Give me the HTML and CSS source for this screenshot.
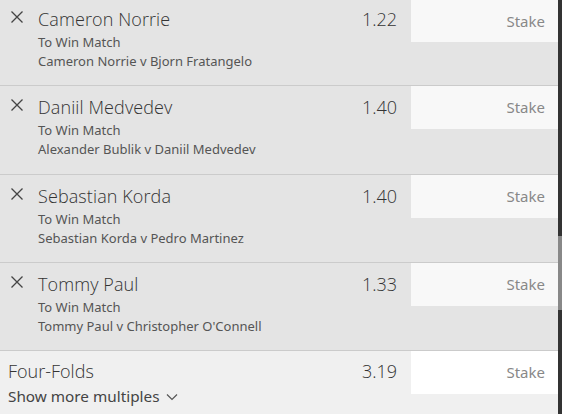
FILE: index.html
```html
<!DOCTYPE html>
<html>
<head>
<meta charset="utf-8">
<link rel="stylesheet" href="styles.css">
</head>
<body>
<div class="page">
  <div class="list">
    <div class="bet first">
      <div class="info">
        <svg class="x" viewBox="0 0 14 14" width="14" height="14"><path d="M1.5 1.5L12.5 12.5M12.5 1.5L1.5 12.5" stroke="#444" stroke-width="1.3" fill="none"/></svg>
        <div class="texts">
          <div class="name">Cameron Norrie</div>
          <div class="market">To Win Match</div>
          <div class="event">Cameron Norrie v Bjorn Fratangelo</div>
        </div>
      </div>
      <div class="odds">1.22</div>
      <div class="stake">Stake</div>
    </div>
    <div class="bet">
      <div class="info">
        <svg class="x" viewBox="0 0 14 14" width="14" height="14"><path d="M1.5 1.5L12.5 12.5M12.5 1.5L1.5 12.5" stroke="#444" stroke-width="1.3" fill="none"/></svg>
        <div class="texts">
          <div class="name">Daniil Medvedev</div>
          <div class="market">To Win Match</div>
          <div class="event">Alexander Bublik v Daniil Medvedev</div>
        </div>
      </div>
      <div class="odds">1.40</div>
      <div class="stake">Stake</div>
    </div>
    <div class="bet">
      <div class="info">
        <svg class="x" viewBox="0 0 14 14" width="14" height="14"><path d="M1.5 1.5L12.5 12.5M12.5 1.5L1.5 12.5" stroke="#444" stroke-width="1.3" fill="none"/></svg>
        <div class="texts">
          <div class="name">Sebastian Korda</div>
          <div class="market">To Win Match</div>
          <div class="event">Sebastian Korda v Pedro Martinez</div>
        </div>
      </div>
      <div class="odds">1.40</div>
      <div class="stake">Stake</div>
    </div>
    <div class="bet">
      <div class="info">
        <svg class="x" viewBox="0 0 14 14" width="14" height="14"><path d="M1.5 1.5L12.5 12.5M12.5 1.5L1.5 12.5" stroke="#444" stroke-width="1.3" fill="none"/></svg>
        <div class="texts">
          <div class="name">Tommy Paul</div>
          <div class="market">To Win Match</div>
          <div class="event">Tommy Paul v Christopher O'Connell</div>
        </div>
      </div>
      <div class="odds">1.33</div>
      <div class="stake">Stake</div>
    </div>
    <div class="multi">
      <div class="multi-info">
        <div class="multi-name">Four-Folds</div>
        <div class="more">Show more multiples <svg class="chev" viewBox="0 0 12 8" width="12" height="8"><path d="M1 1.5L6 6.5L11 1.5" stroke="#555" stroke-width="1.2" fill="none"/></svg></div>
      </div>
      <div class="odds">3.19</div>
      <div class="stake white">Stake</div>
    </div>
  </div>
  <div class="scrollbar"><div class="thumb"></div></div>
</div>
</body>
</html>
```
FILE: styles.css
```css
html, body {
  margin: 0;
  padding: 0;
  background: #f0f0f0;
  overflow: hidden;
}
body {
  font-family: "Noto Sans", "Open Sans", sans-serif;
  color: #444;
}
.page {
  display: flex;
  width: 562px;
  height: 414px;
  overflow: hidden;
}
.list {
  flex: 1;
  display: flex;
  flex-direction: column;
}
.bet {
  display: flex;
  height: 87.3px;
  background: #e4e4e4;
  border-bottom: 1px solid #cbcbcb;
  flex-shrink: 0;
}
.bet.first {
  margin-top: -2px;
}
.info {
  flex: 1;
  display: flex;
  padding-left: 10px;
  padding-top: 9px;
}
.x {
  margin-top: 3px;
  margin-right: 14px;
}
.texts {
  display: flex;
  flex-direction: column;
}
.name {
  font-family: "Open Sans", "Noto Sans", sans-serif;
  font-weight: 300;
  font-size: 18px;
  line-height: 24px;
  margin-bottom: 2px;
  color: #333;
  letter-spacing: 0.1px;
}
.market, .event {
  font-size: 13px;
  line-height: 19px;
  color: #555;
}
.odds {
  font-family: "Open Sans", "Noto Sans", sans-serif;
  font-weight: 300;
  font-size: 18px;
  line-height: 24px;
  padding-top: 9px;
  padding-right: 14px;
  color: #333;
}
.stake {
  width: 147px;
  height: 43px;
  background: #f8f8f8;
  box-sizing: border-box;
  padding-right: 13px;
  text-align: right;
  font-size: 15px;
  line-height: 43px;
  color: #888;
}
.bet.first .stake {
  height: 44px;
  line-height: 46px;
}
.stake.white {
  background: #fff;
}
.multi {
  display: flex;
  background: #f0f0f0;
  height: 64px;
  flex-shrink: 0;
}
.multi-info {
  flex: 1;
  padding-left: 8px;
  padding-top: 8px;
}
.multi .odds {
  padding-top: 8px;
}
.multi-name {
  font-family: "Open Sans", "Noto Sans", sans-serif;
  font-weight: 300;
  font-size: 18px;
  line-height: 24px;
  color: #333;
}
.more {
  font-size: 15.3px;
  line-height: 22px;
  margin-top: 2px;
  color: #444;
  display: flex;
  align-items: center;
  gap: 7px;
}
.chev {
  margin-top: 1px;
}
.scrollbar {
  width: 4px;
  background: #333;
  display: flex;
  flex-direction: column;
  padding-top: 236px;
  box-sizing: border-box;
  flex-shrink: 0;
}
.thumb {
  height: 74px;
  background: #888;
}
```
